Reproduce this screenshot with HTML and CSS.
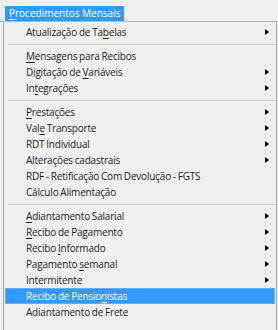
FILE: index.html
```html
<!DOCTYPE html>
<html lang="pt-BR">
<head>
  <meta charset="UTF-8" />
  <title>Procedimentos Mensais</title>
  <link rel="stylesheet" href="styles.css">
</head>
<body>
  <div class="menubar">
    <div class="menubar-item"><u>P</u>rocedimentos Mensais</div>
  </div>
  <div class="menu">
    <div class="item sub"><span>Atualização de Ta<u>b</u>elas</span></div>
    <div class="sep"></div>
    <div class="item"><span><u>M</u>ensagens para Recibos</span></div>
    <div class="item sub"><span>Digitação de <u>V</u>ariáveis</span></div>
    <div class="item sub"><span>In<u>t</u>egrações</span></div>
    <div class="sep"></div>
    <div class="item sub"><span><u>P</u>restações</span></div>
    <div class="item sub"><span>Val<u>e</u> Transporte</span></div>
    <div class="item sub"><span>RDT Individual</span></div>
    <div class="item sub"><span>Alterações cadastrais</span></div>
    <div class="item"><span>RDF - Retificação Com Devolução - FGTS</span></div>
    <div class="item"><span>Cálculo Alimentação</span></div>
    <div class="sep"></div>
    <div class="item sub"><span><u>A</u>diantamento Salarial</span></div>
    <div class="item sub"><span><u>R</u>ecibo de Pagamento</span></div>
    <div class="item sub"><span>Recibo <u>I</u>nformado</span></div>
    <div class="item sub"><span>Pagamento <u>s</u>emanal</span></div>
    <div class="item sub"><span>Intermitente</span></div>
    <div class="item active"><span>Recibo de Pensio<u>n</u>istas</span></div>
    <div class="item"><span>Adiantamento de Frete</span></div>
  </div>
</body>
</html>
```

FILE: styles.css
```css
body {
  margin: 0;
  background-color: #f0f0f0;
  font-family: 'Open Sans', 'Noto Sans', sans-serif;
  font-size: 10px;
  color: #1e1e1e;
}

u {
  text-decoration-thickness: 1px;
  text-underline-offset: 2px;
}

.menubar {
  height: 22px;
  border-bottom: 1px solid #b4b4b4;
  box-sizing: border-box;
  padding: 6px 0 0 5px;
}

.menubar-item {
  display: inline-block;
  height: 15px;
  line-height: 15px;
  padding: 0 4px;
  white-space: nowrap;
  background-color: #3399ff;
  color: #fff;
}

.menu {
  margin-left: 3px;
  width: 274px;
  box-sizing: border-box;
  border-left: 1px solid #a8a8a8;
  border-right: 1px solid #a8a8a8;
  padding-top: 2px;
  height: 308px;
}

.item {
  display: flex;
  justify-content: space-between;
  align-items: center;
  height: 16px;
  margin: 0 1px;
  padding-left: 21px;
  box-sizing: border-box;
  white-space: nowrap;
  letter-spacing: -0.2px;
  word-spacing: -0.5px;
}

.item.sub::after {
  content: "";
  border-left: 4px solid #000;
  border-top: 3px solid transparent;
  border-bottom: 3px solid transparent;
  margin-right: 6px;
}

.item.active {
  background-color: #3399ff;
  border: 1px solid #5fb0ff;
  padding-left: 20px;
  color: #fff;
}

.sep {
  height: 8px;
  display: flex;
  align-items: center;
}

.sep::before {
  content: "";
  flex: 1;
  margin: 0 1px 0 4px;
  border-top: 1px solid #c8c8c8;
}
```
